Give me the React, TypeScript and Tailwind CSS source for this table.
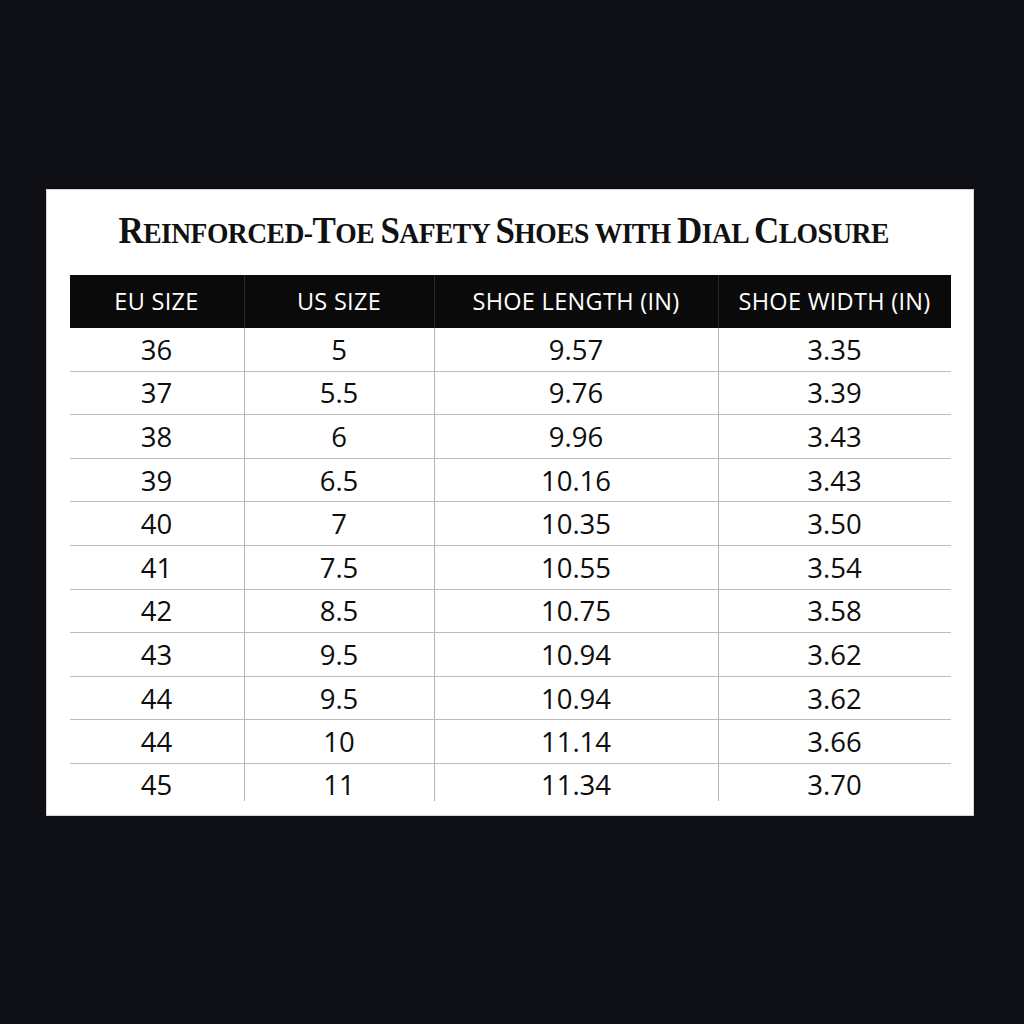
import React from 'react';

const rows: [string, string, string, string][] = [
  ['36', '5', '9.57', '3.35'],
  ['37', '5.5', '9.76', '3.39'],
  ['38', '6', '9.96', '3.43'],
  ['39', '6.5', '10.16', '3.43'],
  ['40', '7', '10.35', '3.50'],
  ['41', '7.5', '10.55', '3.54'],
  ['42', '8.5', '10.75', '3.58'],
  ['43', '9.5', '10.94', '3.62'],
  ['44', '9.5', '10.94', '3.62'],
  ['44', '10', '11.14', '3.66'],
  ['45', '11', '11.34', '3.70'],
];

const headers = ['EU SIZE', 'US SIZE', 'SHOE LENGTH (IN)', 'SHOE WIDTH (IN)'];

const cols = 'grid grid-cols-[174px_190px_284px_233px]';

// title pieces: [text, isCap]
const title: [string, boolean][] = [
  ['R', true], ['EINFORCED-', false], ['T', true], ['OE ', false],
  ['S', true], ['AFETY ', false], ['S', true], ['HOES WITH ', false],
  ['D', true], ['IAL ', false], ['C', true], ['LOSURE', false],
];

export default function App() {
  return (
    <div className="w-[1024px] h-[1024px] bg-[#0e1015] pt-[189px] pl-[46px]">
      <div className="w-[928px] h-[627px] bg-white border border-[#d6d6d6] flex flex-col items-center">
        <h1
          className="mt-[19px] mr-[13px] h-[42px] leading-[42px] font-bold text-[#111] whitespace-pre tracking-[-0.6px] scale-x-[0.92]"
          style={{ fontFamily: '"Liberation Serif", "DejaVu Serif", serif' }}
        >
          {title.map(([t, cap], i) => (
            <span key={i} className={cap ? 'text-[38px]' : 'text-[30px]'}>
              {t}
            </span>
          ))}
        </h1>
        <div className="mt-[24px] w-[881px]" style={{ fontFamily: '"Open Sans", "Noto Sans", sans-serif' }}>
          <div className={`${cols} h-[53px] bg-[#0a0a0a] text-white`}>
            {headers.map((h, i) => (
              <div
                key={h}
                className={`flex items-center justify-center text-[23.5px] tracking-[0.3px] ${i > 0 ? 'border-l border-[#2a2a2a]' : ''}`}
              >
                {h}
              </div>
            ))}
          </div>
          {rows.map((r, ri) => {
            const last = ri === rows.length - 1;
            return (
              <div
                key={ri}
                className={`${cols} text-[27.5px] text-[#0d0d0d] ${last ? 'h-[37px]' : 'h-[43.6px] border-b border-[#bdbdbd]'}`}
              >
                {r.map((c, ci) => (
                  <div
                    key={ci}
                    className={`flex justify-center ${last ? 'h-[37px] items-start leading-[42px]' : 'items-center leading-[33px]'} ${ci > 0 ? 'border-l border-[#b5b5b5]' : ''}`}
                  >
                    <span className={last ? 'h-[37px]' : ''}>{c}</span>
                  </div>
                ))}
              </div>
            );
          })}
        </div>
      </div>
    </div>
  );
}
